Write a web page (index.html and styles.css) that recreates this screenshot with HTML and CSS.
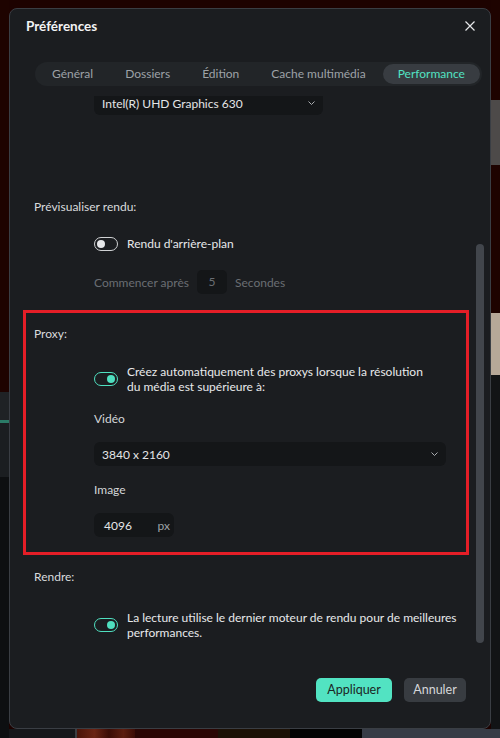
FILE: index.html
```html
<!DOCTYPE html>
<html lang="fr">
<head>
<meta charset="utf-8">
<title>Préférences</title>
<link rel="stylesheet" href="styles.css">
</head>
<body>
<div class="backdrop">
  <div class="strip strip-left">
    <div class="l1"></div><div class="l2"></div><div class="l3"></div><div class="l4"></div><div class="l5"></div>
  </div>
  <div class="strip-center">
    <div class="c-top"></div>
    <div class="c-bottom">
      <span class="seg b1"></span><span class="seg b2"></span><span class="seg b3"></span><span class="seg b4"></span><span class="seg b5"></span><span class="seg b6"></span><span class="seg b7"></span>
    </div>
  </div>
  <div class="strip strip-right">
    <div class="r1"></div><div class="r2"></div><div class="r3"></div><div class="r4"></div><div class="r5"></div><div class="r6"></div>
  </div>
</div>

<div class="dialog">
  <header class="dlg-head">
    <h1 class="dlg-title">Préférences</h1>
    <span class="close" aria-label="Fermer">
      <svg width="10" height="10" viewBox="0 0 10 10"><path d="M0.5 0.5 L9.5 9.5 M9.5 0.5 L0.5 9.5" stroke="#e6e7e9" stroke-width="1.2" fill="none"/></svg>
    </span>
  </header>

  <nav class="tabs">
    <span class="tab">Général</span>
    <span class="tab">Dossiers</span>
    <span class="tab">Édition</span>
    <span class="tab">Cache multimédia</span>
    <span class="tab active">Performance</span>
  </nav>

  <div class="dlg-body">
    <div class="scroll">
      <div class="select select-gpu">
        <span>Intel(R) UHD Graphics 630</span>
        <svg class="chev" width="7" height="4" viewBox="0 0 7 4"><polyline points="0.5,0.5 3.5,3.5 6.5,0.5" fill="none" stroke="#a9acb0" stroke-width="1"/></svg>
      </div>

      <section class="group g-preview">
        <div class="label">Prévisualiser rendu:</div>
        <div class="indent toggle-row row-preview">
          <span class="toggle off"><span class="knob"></span></span>
          <span class="toggle-text">Rendu d'arrière-plan</span>
        </div>
        <div class="indent delay-row">
          <span>Commencer après</span>
          <span class="num">5</span>
          <span>Secondes</span>
        </div>
      </section>

      <section class="group g-proxy">
        <div class="label">Proxy:</div>
        <div class="indent toggle-row row-proxy">
          <span class="toggle on"><span class="knob"></span></span>
          <span class="toggle-text two">Créez automatiquement des proxys lorsque la résolution<br>du média est supérieure à:</span>
        </div>
        <div class="indent field-label fl-video">Vidéo</div>
        <div class="indent select select-video">
          <span>3840 x 2160</span>
          <svg class="chev" width="7" height="4" viewBox="0 0 7 4"><polyline points="0.5,0.5 3.5,3.5 6.5,0.5" fill="none" stroke="#a9acb0" stroke-width="1"/></svg>
        </div>
        <div class="indent field-label fl-image">Image</div>
        <div class="indent px-input">
          <span class="px-val">4096</span>
          <span class="px-unit">px</span>
        </div>
      </section>

      <section class="group g-render">
        <div class="label">Rendre:</div>
        <div class="indent toggle-row row-render">
          <span class="toggle on"><span class="knob"></span></span>
          <span class="toggle-text two">La lecture utilise le dernier moteur de rendu pour de meilleures<br>performances.</span>
        </div>
      </section>
    </div>
    <div class="scrollbar"><div class="thumb"></div></div>
  </div>

  <footer class="dlg-foot">
    <span class="btn btn-primary">Appliquer</span>
    <span class="btn btn-secondary">Annuler</span>
  </footer>
</div>
</body>
</html>
```

FILE: styles.css
```css
* { box-sizing: border-box; margin: 0; padding: 0; }

html, body {
  width: 500px;
  height: 738px;
  overflow: hidden;
}

body {
  position: relative;
  background: #121416;
  font-family: "Lato", "Liberation Sans", sans-serif;
  font-size: 12px;
  color: #e6e7e9;
}

/* ---------- backdrop (application behind the modal) ---------- */
.backdrop {
  display: flex;
  height: 738px;
}
.strip { display: flex; flex-direction: column; width: 9px; flex: none; }
.strip-left .l1 { height: 392px; background: #1e0300; }
.strip-left .l2 { height: 28px; background: #1f2225; }
.strip-left .l3 { height: 3px; background: #2b7b67; }
.strip-left .l4 { height: 54px; background: #1b1e21; }
.strip-left .l5 { flex: 1; background: #0d0f11; }

.strip-center { flex: 1; display: flex; flex-direction: column; }
.c-top { flex: 1; background: #1d0200; }
.c-bottom { height: 9px; display: flex; }
.seg { display: block; height: 100%; }
.b1 { width: 66px; background: #15171a; }
.b2 { width: 2px; background: #3a3d42; }
.b3 { width: 58px; background: linear-gradient(90deg, #4a1409, #6a2414 30%, #3a0c05 55%, #5c1d0f 80%, #3a0c05); }
.b4 { width: 83px; background: #2a0604; }
.b5 { width: 72px; background: #1c1106; }
.b6 { width: 72px; background: #030303; }
.b7 { flex: 1; background: #373c46; }

.strip-right .r1 { height: 100px; background: #1e0300; }
.strip-right .r2 { height: 65px; background: #4d4a49; }
.strip-right .r3 { height: 148px; background: #1e0300; }
.strip-right .r4 { height: 62px; background: #b6a898; }
.strip-right .r5 { flex: 1; background: #121416; }
.strip-right .r6 { height: 9px; background: #373c46; }

/* ---------- modal ---------- */
.dialog {
  position: absolute;
  left: 9px;
  top: 8px;
  width: 482px;
  height: 721px;
  background: #1b1d20;
  border: 1px solid #3a3e44;
  border-radius: 8px;
  display: flex;
  flex-direction: column;
  overflow: hidden;
}

.dlg-head {
  height: 34px;
  padding: 0 15px 0 16px;
  display: flex;
  align-items: center;
  justify-content: space-between;
  flex: none;
}
.dlg-title {
  font-size: 13.5px;
  font-weight: 700;
  color: #f2f3f4;
}
.close { display: flex; width: 10px; height: 10px; }

/* tabs */
.tabs {
  margin: 19px 8px 0 25px;
  height: 24px;
  padding: 2px;
  display: flex;
  gap: 2px;
  background: #222528;
  border-radius: 12px;
  flex: none;
}
.tab {
  padding: 0 15px;
  line-height: 20px;
  color: #9ea2a7;
  border-radius: 10px;
  white-space: nowrap;
}
.tab.active {
  background: #383c41;
  color: #52e2c3;
}

/* body */
.dlg-body {
  flex: 1;
  min-height: 0;
  margin-top: 10px;
  display: flex;
}
.scroll {
  width: 466px;
  padding-left: 13px;
  overflow: hidden;
  flex: none;
}
.scrollbar { width: 8px; flex: none; }
.thumb {
  margin-top: 148px;
  height: 399px;
  background: #42464c;
  border-radius: 4px;
}

.select {
  background: #141618;
  display: flex;
  justify-content: space-between;
  color: #e4e5e7;
}
.select-gpu {
  margin-left: 71px;
  width: 229px;
  height: 19px;
  border-radius: 0 0 6px 6px;
  padding: 0 8px;
  align-items: flex-start;
  line-height: 16px;
}
.select-gpu .chev { margin-top: 5px; }

.group {
  width: 446px;
  border: 3px solid transparent;
  padding: 0 20px 0 8px;
}
.g-preview { padding-top: 81px; }
.g-proxy {
  margin-top: 13px;
  border-color: #e41e27;
  padding-top: 13px;
  padding-bottom: 15px;
}
.g-render { padding-top: 11px; }

.label {
  line-height: 16px;
  color: #d9dbdd;
}
.indent { margin-left: 60px; }

.toggle-row {
  display: flex;
  align-items: center;
  gap: 9px;
}
.row-preview { margin-top: 21px; line-height: 16px; }
.row-proxy { margin-top: 22px; }
.row-render { margin-top: 25px; }
.toggle-text { color: #e8e9eb; white-space: nowrap; }
.toggle-text.two { line-height: 15px; }

.toggle {
  width: 24px;
  height: 14px;
  border-radius: 7px;
  border: 1.5px solid #d0d2d4;
  display: flex;
  align-items: center;
  padding: 0 2px;
  flex: none;
}
.knob { width: 8px; height: 8px; border-radius: 50%; background: #e6e7e9; }
.toggle.on { border-color: #4fdfbf; justify-content: flex-end; }
.toggle.on .knob { background: #4fdfbf; }

.delay-row {
  margin-top: 18px;
  height: 24px;
  display: flex;
  align-items: center;
  gap: 8px;
  color: #6a6e73;
}
.num {
  width: 30px;
  height: 24px;
  line-height: 24px;
  text-align: center;
  background: #141618;
  border-radius: 5px;
}

.field-label { line-height: 16px; color: #d4d6d8; }
.fl-video { margin-top: 17px; }
.fl-image { margin-top: 16px; }

.select-video {
  margin-top: 15px;
  width: 352px;
  height: 24px;
  border-radius: 6px;
  padding: 0 8px;
  align-items: center;
}

.px-input {
  margin-top: 15px;
  width: 80px;
  height: 24px;
  border-radius: 6px;
  background: #141618;
  padding: 0 4px 0 10px;
  display: flex;
  align-items: center;
  justify-content: space-between;
}
.px-val { color: #e4e5e7; }
.px-unit { color: #9ea2a6; }

/* footer */
.dlg-foot {
  flex: none;
  display: flex;
  justify-content: flex-end;
  gap: 12px;
  padding: 0 24px 26px 0;
}
.btn {
  height: 24px;
  line-height: 24px;
  border-radius: 5px;
  text-align: center;
  font-size: 12.5px;
}
.btn-primary { width: 76px; background: #52e3c2; color: #1c2624; }
.btn-secondary { width: 62px; background: #383c41; color: #d5d7d9; }
```
